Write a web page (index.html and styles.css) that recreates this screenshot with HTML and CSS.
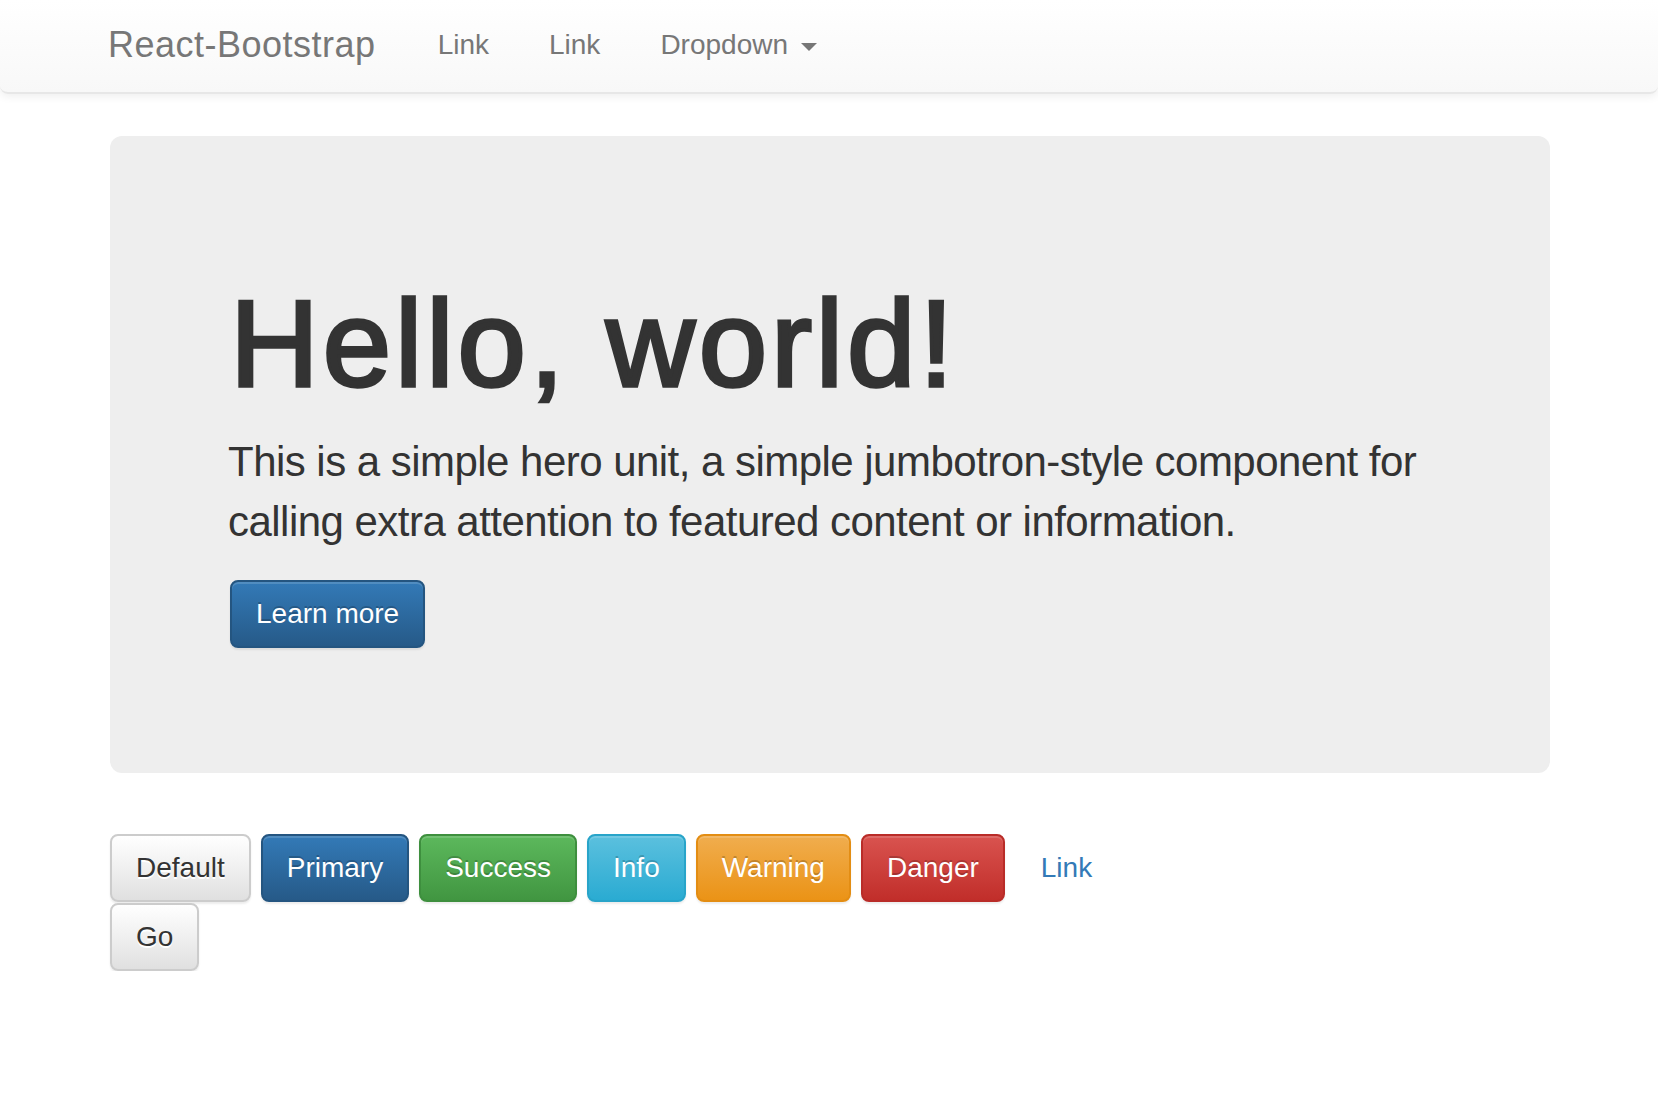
FILE: index.html
```html
<!DOCTYPE html>
<html lang="en">
<head>
<meta charset="utf-8">
<title>React-Bootstrap</title>
<link rel="stylesheet" href="styles.css">
</head>
<body>
<nav class="navbar">
  <div class="nav-inner">
    <a class="brand" href="#">React-Bootstrap</a>
    <ul class="nav">
      <li><a href="#">Link</a></li>
      <li><a href="#">Link</a></li>
      <li><a href="#">Dropdown<span class="caret"></span></a></li>
    </ul>
  </div>
</nav>
<main class="page">
  <div class="jumbotron">
    <h1>Hello, world!</h1>
    <p class="lead">This is a simple hero unit, a simple jumbotron-style component for calling extra attention to featured content or information.</p>
    <p class="actions"><a class="btn btn-primary" href="#">Learn more</a></p>
  </div>
  <div class="btn-row">
    <button class="btn btn-default" type="button">Default</button>
    <button class="btn btn-primary" type="button">Primary</button>
    <button class="btn btn-success" type="button">Success</button>
    <button class="btn btn-info" type="button">Info</button>
    <button class="btn btn-warning" type="button">Warning</button>
    <button class="btn btn-danger" type="button">Danger</button>
    <button class="btn btn-link" type="button">Link</button>
  </div>
  <div class="go-row">
    <button class="btn btn-default" type="button">Go</button>
  </div>
</main>
</body>
</html>
```
FILE: styles.css
```css
* { box-sizing: border-box; }

body {
  margin: 0;
  font-family: "Liberation Sans", Arial, Helvetica, sans-serif;
  color: #333;
  background: #fff;
}

.navbar {
  height: 94px;
  background: linear-gradient(to bottom, #ffffff 0%, #f8f8f8 100%);
  border-bottom: 2px solid #e7e7e7;
  border-radius: 0 0 8px 8px;
  box-shadow: inset 0 2px 0 rgba(255,255,255,.15), 0 2px 10px rgba(0,0,0,.075);
}

.nav-inner {
  display: flex;
  align-items: flex-start;
  padding: 25px 0 0 108px;
}

.brand {
  font-size: 36px;
  line-height: 40px;
  color: #777;
  text-decoration: none;
  letter-spacing: 0.5px;
  padding-right: 32px;
  text-shadow: 0 2px 0 rgba(255,255,255,.25);
}

.nav {
  display: flex;
  list-style: none;
  margin: 0;
  padding: 0;
}

.nav a {
  display: block;
  font-size: 28px;
  line-height: 40px;
  color: #777;
  padding: 0 30px;
  text-decoration: none;
  text-shadow: 0 2px 0 rgba(255,255,255,.25);
}

.caret {
  display: inline-block;
  width: 0;
  height: 0;
  margin-left: 13px;
  vertical-align: middle;
  border-top: 8px solid #777;
  border-left: 8px solid transparent;
  border-right: 8px solid transparent;
}

.page {
  padding: 42px 108px 0 110px;
}

.jumbotron {
  background: #eee;
  border-radius: 12px;
  padding: 96px 100px 96px 120px;
}

.jumbotron h1 {
  margin: 43px 0 19px;
  font-size: 123px;
  line-height: 138px;
  font-weight: 400;
  letter-spacing: 3.9px;
  -webkit-text-stroke: 3.5px #333;
  color: #333;
}

.lead {
  margin: 0 0 28px -2px;
  font-size: 42px;
  line-height: 60px;
  font-weight: 300;
  letter-spacing: -0.53px;
}

.actions {
  margin: 0 0 29px;
  display: flex;
}

.btn {
  display: inline-block;
  font-family: inherit;
  font-size: 28px;
  line-height: 40px;
  padding: 12px 24px;
  border: 2px solid transparent;
  border-radius: 8px;
  text-decoration: none;
  white-space: nowrap;
  cursor: pointer;
  color: #fff;
  text-shadow: 0 -2px 0 rgba(0,0,0,.2);
  box-shadow: inset 0 2px 0 rgba(255,255,255,.15), 0 2px 2px rgba(0,0,0,.075);
}

.btn-default {
  color: #333;
  text-shadow: 0 2px 0 #fff;
  background: linear-gradient(to bottom, #ffffff 0%, #e0e0e0 100%);
  border-color: #ccc;
}

.btn-primary {
  background: linear-gradient(to bottom, #337ab7 0%, #265a88 100%);
  border-color: #245580;
}

.btn-success {
  background: linear-gradient(to bottom, #5cb85c 0%, #419641 100%);
  border-color: #3e8f3e;
}

.btn-info {
  background: linear-gradient(to bottom, #5bc0de 0%, #2aabd2 100%);
  border-color: #28a4c9;
}

.btn-warning {
  background: linear-gradient(to bottom, #f0ad4e 0%, #eb9316 100%);
  border-color: #e38d13;
}

.btn-danger {
  background: linear-gradient(to bottom, #d9534f 0%, #c12e2a 100%);
  border-color: #b92c28;
}

.btn-link {
  color: #337ab7;
  background: transparent;
  border-color: transparent;
  text-shadow: none;
  box-shadow: none;
}

.btn-row {
  display: flex;
  align-items: flex-start;
  gap: 10px;
  margin-top: 61px;
}

.go-row {
  display: flex;
  margin-top: 1px;
}
```
